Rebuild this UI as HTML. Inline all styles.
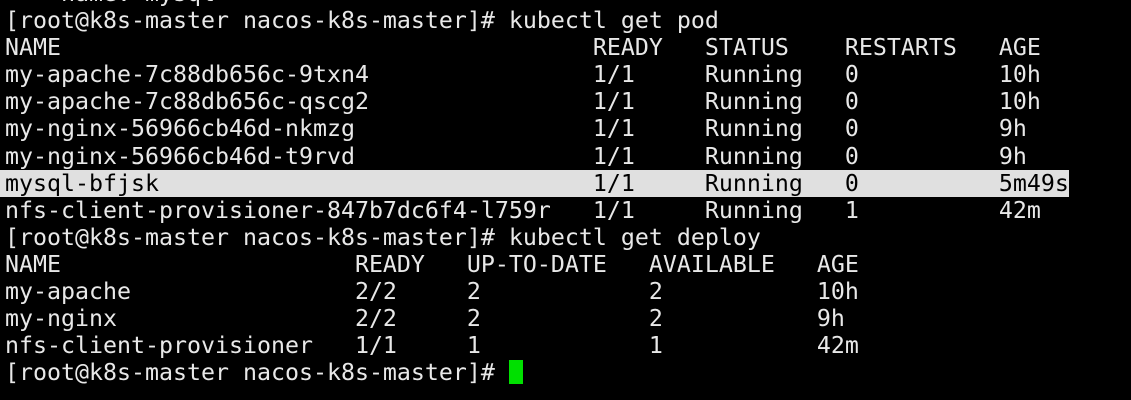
<!DOCTYPE html>
<html><head><style>
html,body{margin:0;padding:0;background:#000;width:1131px;height:400px;overflow:hidden}
pre{position:absolute;left:5px;top:-20px;margin:0;font-family:"DejaVu Sans Mono","Liberation Mono",monospace;font-size:23.25px;line-height:27.1px;color:#e8e8e8}
.hl{position:absolute;left:0;top:170px;width:1069px;height:27px;background:#e0e0e0}
.hlt{color:#000}
.cur{position:absolute;left:509px;top:360px;width:14px;height:24px;background:#00e000}
</style></head><body>
<div class="hl"></div>
<pre>    name: mysql
[root@k8s-master nacos-k8s-master]# kubectl get pod
NAME                                      READY   STATUS    RESTARTS   AGE
my-apache-7c88db656c-9txn4                1/1     Running   0          10h
my-apache-7c88db656c-qscg2                1/1     Running   0          10h
my-nginx-56966cb46d-nkmzg                 1/1     Running   0          9h
my-nginx-56966cb46d-t9rvd                 1/1     Running   0          9h
<span class="hlt">mysql-bfjsk                               1/1     Running   0          5m49s</span>
nfs-client-provisioner-847b7dc6f4-l759r   1/1     Running   1          42m
[root@k8s-master nacos-k8s-master]# kubectl get deploy
NAME                     READY   UP-TO-DATE   AVAILABLE   AGE
my-apache                2/2     2            2           10h
my-nginx                 2/2     2            2           9h
nfs-client-provisioner   1/1     1            1           42m
[root@k8s-master nacos-k8s-master]# </pre>
<div class="cur"></div>
</body></html>
